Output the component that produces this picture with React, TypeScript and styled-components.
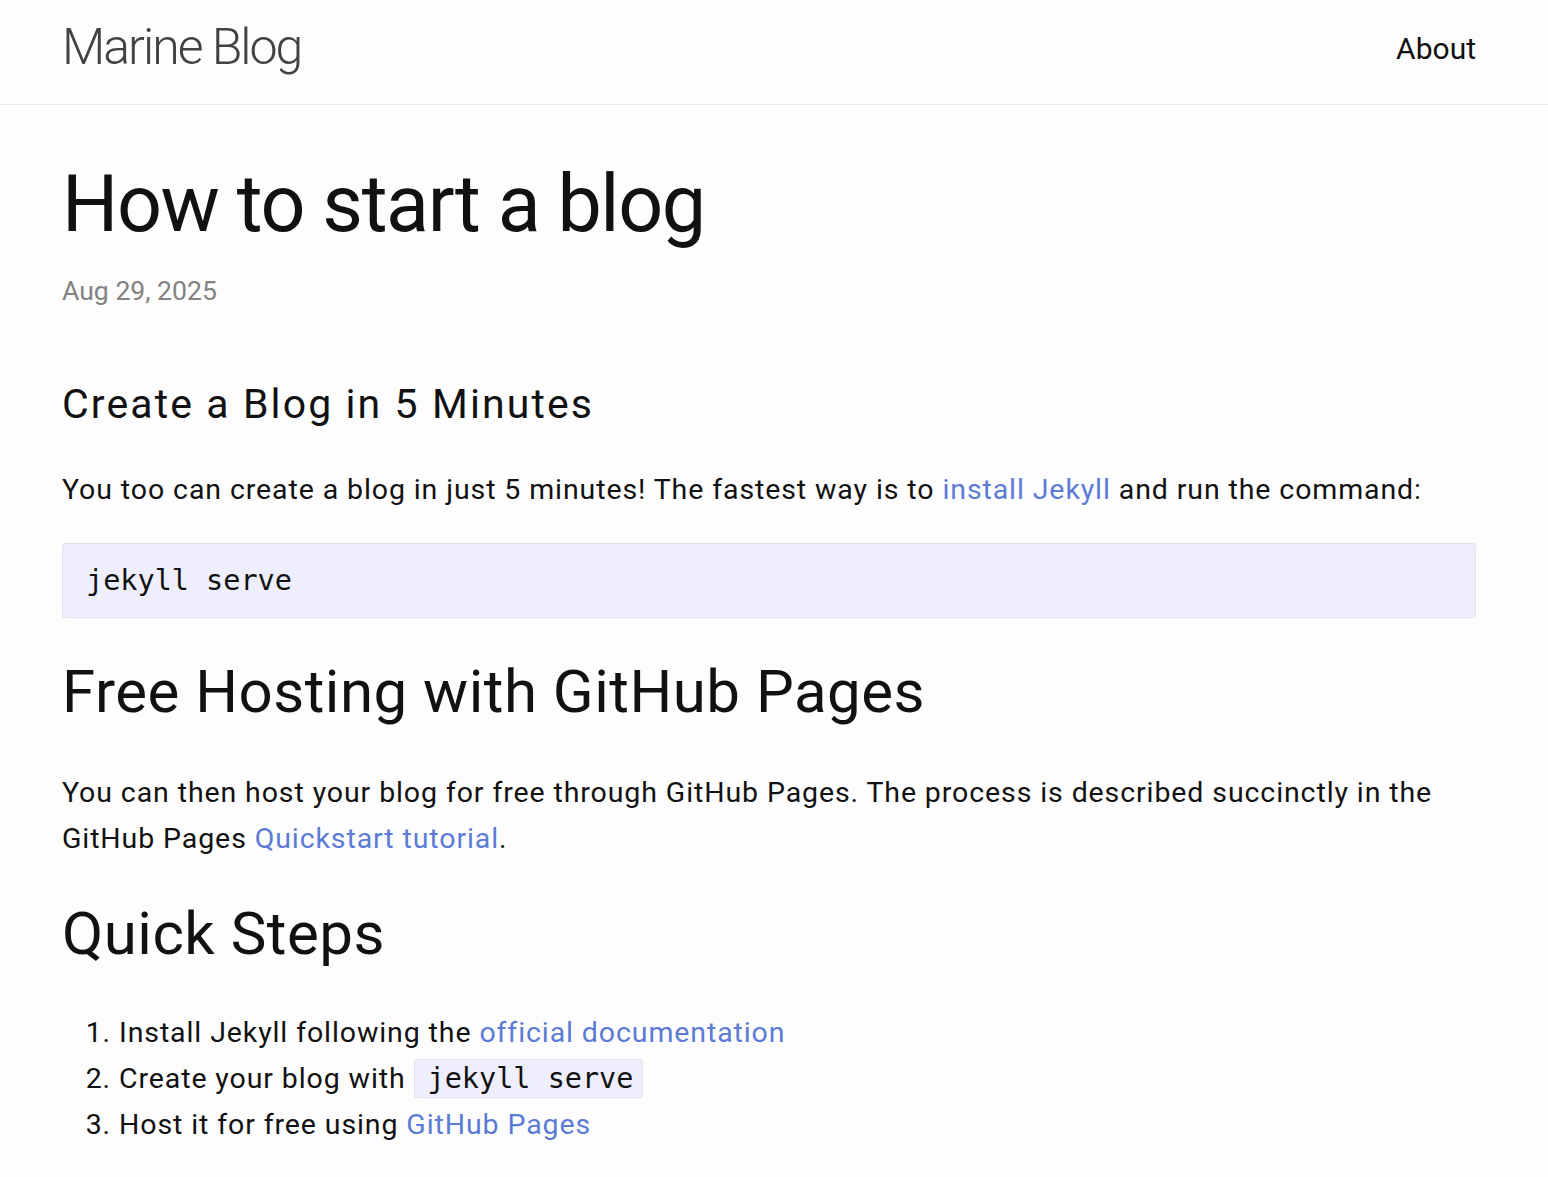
import React from 'react';
import styled, { createGlobalStyle } from 'styled-components';

const GlobalStyle = createGlobalStyle`
  * {
    box-sizing: border-box;
  }

  html, body {
    margin: 0;
    padding: 0;
    background-color: #fdfdfd;
  }

  body {
    font-family: Roboto, "Noto Sans", "Liberation Sans", sans-serif;
    color: #111;
  }
`;

const SiteHeader = styled.header`
  height: 105px;
  border-bottom: 1px solid #e8e8e8;
`;

const Wrapper = styled.div`
  padding-left: 62px;
  padding-right: 72px;
`;

const HeaderRow = styled(Wrapper)`
  display: flex;
  justify-content: space-between;
  align-items: flex-start;
`;

const SiteTitle = styled.a`
  font-size: 50px;
  font-weight: 300;
  line-height: 94px;
  letter-spacing: -2px;
  color: #424242;
  text-decoration: none;
`;

const Nav = styled.nav`
  padding-top: 26px;
`;

const PageLink = styled.a`
  font-size: 30px;
  line-height: 46px;
  color: #111;
  text-decoration: none;
`;

const Main = styled.main`
  padding-top: 59px;
`;

const PostTitle = styled.h1`
  margin: 0 0 27px;
  font-size: 79px;
  font-weight: 400;
  line-height: 80px;
  letter-spacing: -1.4px;
`;

const PostMeta = styled.p`
  margin: 0 0 64px;
  font-size: 26.6px;
  line-height: 39px;
  color: #828282;
`;

const SubHeading = styled.h3`
  margin: 0 0 33px;
  font-size: 41px;
  font-weight: 400;
  line-height: 60px;
  letter-spacing: 2.1px;
`;

const SectionHeading = styled.h2`
  margin: 36px 0 42px;
  font-size: 60px;
  font-weight: 400;
  line-height: 72px;
  letter-spacing: 0.5px;
`;

const Paragraph = styled.p`
  margin: 0 0 30px;
  font-size: 28.5px;
  line-height: 46px;
  letter-spacing: 0.9px;
`;

const Link = styled.a`
  color: #5b7bd6;
  text-decoration: none;
`;

const CodeBlock = styled.pre`
  margin: 0 0 38px;
  padding: 14px 24px 14px 23px;
  background-color: #eeeefc;
  border: 1px solid #e2e2e8;
  border-radius: 3px;
  font-family: "DejaVu Sans Mono", "Liberation Mono", monospace;
  font-size: 28.5px;
  line-height: 45px;
  letter-spacing: 0;
  overflow-x: auto;
`;

const InlineCode = styled.code`
  padding: 2px 9px 2px 13px;
  background-color: #eeeefc;
  border: 1px solid #e2e2e8;
  border-radius: 3px;
  font-family: "DejaVu Sans Mono", "Liberation Mono", monospace;
  font-size: 28.5px;
  letter-spacing: 0;
`;

const StepList = styled.ol`
  margin: -2px 0 40px 57px;
  padding: 0;
  font-size: 28.5px;
  line-height: 46px;
  letter-spacing: 0.9px;
`;

const Step = styled.li``;

export default function App() {
  return (
    <>
      <GlobalStyle />
      <SiteHeader>
        <HeaderRow>
          <SiteTitle href="#">Marine Blog</SiteTitle>
          <Nav>
            <PageLink href="#">About</PageLink>
          </Nav>
        </HeaderRow>
      </SiteHeader>
      <Main>
        <Wrapper>
          <article>
            <header>
              <PostTitle>How to start a blog</PostTitle>
              <PostMeta>
                <time>Aug 29, 2025</time>
              </PostMeta>
            </header>
            <div>
              <SubHeading>Create a Blog in 5 Minutes</SubHeading>
              <Paragraph>
                You too can create a blog in just 5 minutes! The fastest way is to{' '}
                <Link href="#">install Jekyll</Link> and run the command:
              </Paragraph>
              <CodeBlock>jekyll serve</CodeBlock>
              <SectionHeading>Free Hosting with GitHub Pages</SectionHeading>
              <Paragraph>
                You can then host your blog for free through GitHub Pages. The process is described
                succinctly in the GitHub Pages <Link href="#">Quickstart tutorial</Link>.
              </Paragraph>
              <SectionHeading>Quick Steps</SectionHeading>
              <StepList>
                <Step>
                  Install Jekyll following the <Link href="#">official documentation</Link>
                </Step>
                <Step>
                  Create your blog with <InlineCode>jekyll serve</InlineCode>
                </Step>
                <Step>
                  Host it for free using <Link href="#">GitHub Pages</Link>
                </Step>
              </StepList>
            </div>
          </article>
        </Wrapper>
      </Main>
    </>
  );
}
